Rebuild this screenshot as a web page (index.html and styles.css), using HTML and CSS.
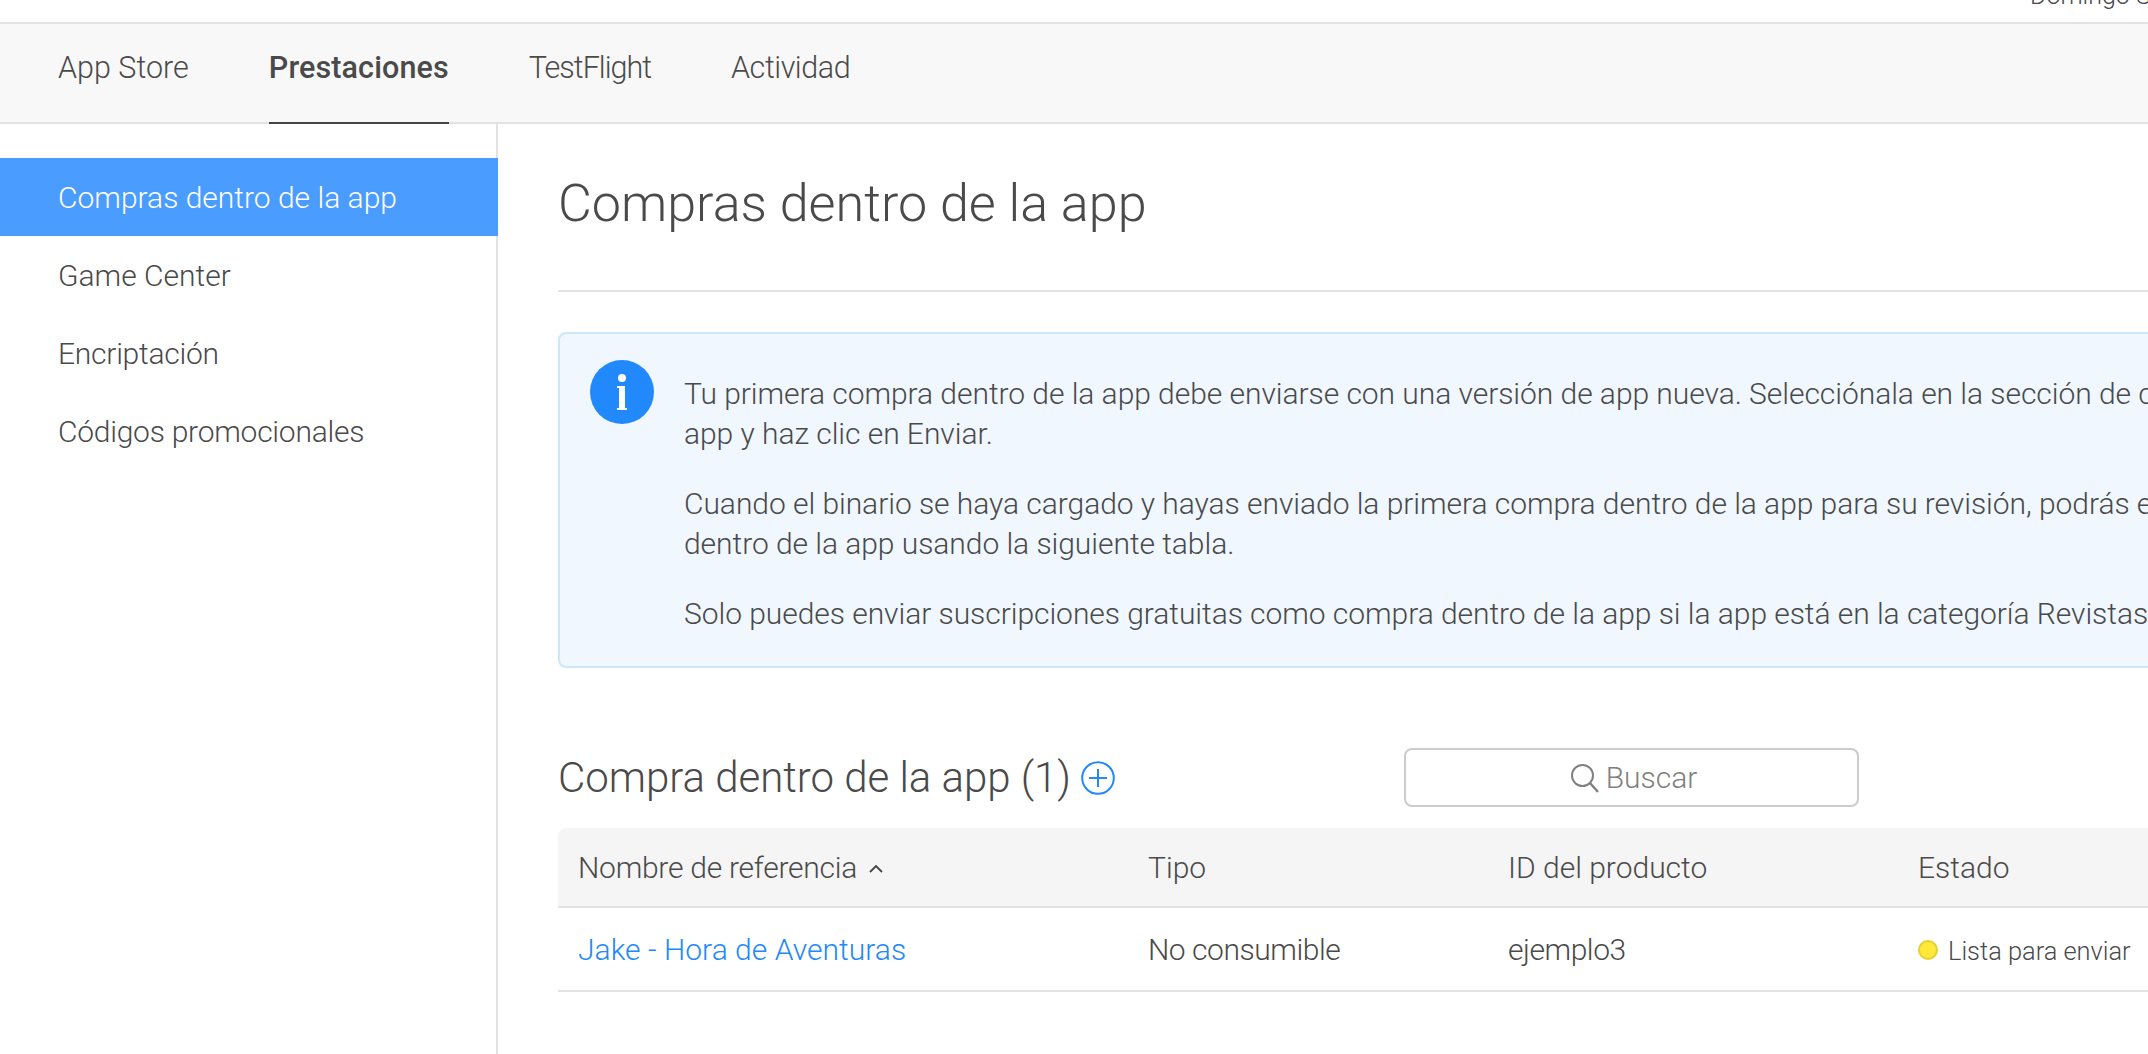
FILE: index.html
```html
<!DOCTYPE html>
<html lang="es">
<head>
  <meta charset="UTF-8">
  <title>Compras dentro de la app</title>
  <link rel="stylesheet" href="styles.css">
</head>
<body>
  <div class="topbar"><span class="user">Domingo S</span></div>

  <nav class="tabs">
    <a class="tab">App Store</a>
    <a class="tab active">Prestaciones</a>
    <a class="tab tight-lg">TestFlight</a>
    <a class="tab tight">Actividad</a>
  </nav>

  <div class="layout">
    <aside class="sidebar">
      <a class="side-item selected">Compras dentro de la app</a>
      <a class="side-item">Game Center</a>
      <a class="side-item tight-sm">Encriptación</a>
      <a class="side-item tight-sm">Códigos promocionales</a>
    </aside>

    <main class="content">
      <h1 class="page-title">Compras dentro de la app</h1>

      <div class="notice">
        <svg class="info-icon" viewBox="0 0 64 64">
          <circle cx="32" cy="32" r="32" fill="#2189fb"/>
          <circle cx="32" cy="18" r="4" fill="#fff"/>
          <path d="M27 26h8v22h2v2H27v-2h2V28h-2z" fill="#fff"/>
        </svg>
        <div class="notice-text">
          <p>Tu primera compra dentro de la app debe enviarse con una versión de app nueva. Selecciónala en la sección de compras dentro de la<br>app y haz clic en Enviar.</p>
          <p>Cuando el binario se haya cargado y hayas enviado la primera compra dentro de la app para su revisión, podrás enviar más compras<br>dentro de la app usando la siguiente tabla.</p>
          <p>Solo puedes enviar suscripciones gratuitas como compra dentro de la app si la app está en la categoría Revistas y periódicos.</p>
        </div>
      </div>

      <div class="section-head">
        <h2 class="section-title">Compra dentro de la app (1)</h2>
        <svg class="add-icon" viewBox="0 0 34 34">
          <circle cx="17" cy="17" r="15.8" fill="none" stroke="#2189fb" stroke-width="2"/>
          <path d="M17 8v18M8 17h18" stroke="#2189fb" stroke-width="2"/>
        </svg>
        <div class="search">
          <svg class="search-icon" viewBox="0 0 30 30">
            <circle cx="12.5" cy="12.5" r="10.5" fill="none" stroke="#808080" stroke-width="2"/>
            <path d="M20 20l8 9" stroke="#808080" stroke-width="2.4"/>
          </svg>
          <span>Buscar</span>
        </div>
      </div>

      <div class="table">
        <div class="row head">
          <div class="cell tight-sm">Nombre de referencia
            <svg class="sort" viewBox="0 0 14 9"><path d="M1 8l6-6 6 6" fill="none" stroke="#444" stroke-width="1.8"/></svg>
          </div>
          <div class="cell">Tipo</div>
          <div class="cell">ID del producto</div>
          <div class="cell">Estado</div>
        </div>
        <div class="row">
          <div class="cell"><a class="link">Jake - Hora de Aventuras</a></div>
          <div class="cell tight">No consumible</div>
          <div class="cell tight">ejemplo3</div>
          <div class="cell status"><span class="dot"></span><span class="status-text">Lista para enviar</span></div>
        </div>
      </div>
    </main>
  </div>
</body>
</html>
```

FILE: styles.css
```css
html, body { margin: 0; height: 100%; overflow: hidden; }
body { font-family: Roboto, "Liberation Sans", sans-serif; font-weight: 300; color: #4a4a4a; background: #fff; font-size: 30px; }
p, h1, h2 { margin: 0; font-weight: 300; }

.tight-lg { letter-spacing: -1px; }
.tight { letter-spacing: -.45px; }
.tight-sm { letter-spacing: -.25px; }

.topbar { height: 22px; overflow: hidden; display: flex; justify-content: flex-end; }
.user { font-size: 25px; line-height: 24px; margin-top: -16px; margin-right: -5px; width: 123px; white-space: nowrap; overflow: hidden; }

.tabs { display: flex; gap: 80px; height: 98px; padding-left: 58px; background: #f8f8f8; border-top: 2px solid #e2e2e2; border-bottom: 2px solid #e2e2e2; font-size: 30.5px; }
.tab { line-height: 88px; height: 100px; box-sizing: border-box; }
.tab.active { font-weight: 500; letter-spacing: .12px; border-bottom: 2px solid #444; }

.layout { display: flex; height: 930px; }
.sidebar { width: 496px; flex: none; padding-top: 34px; border-right: 2px solid #e2e2e2; }
.side-item { display: block; height: 78px; line-height: 80px; padding-left: 58px; }
.side-item.selected { background: #4a9cff; color: #fff; margin-right: -2px; }

.content { width: 2000px; flex: none; padding-left: 60px; }
.page-title { font-size: 52.1px; line-height: 60px; padding-top: 50px; padding-bottom: 56px; border-bottom: 2px solid #e2e2e2; }

.notice { margin-top: 40px; height: 336px; box-sizing: border-box; display: flex; background: #f0f7fe; border: 2px solid #cce6fb; border-radius: 8px; padding: 26px 30px; }
.info-icon { width: 64px; height: 64px; flex: none; margin-right: 30px; }
.notice-text { padding-top: 14px; line-height: 40px; white-space: nowrap; letter-spacing: -.05px; }
.notice-text p { margin-bottom: 30px; }

.section-head { display: flex; align-items: center; height: 60px; margin-top: 80px; }
.section-title { font-size: 42px; line-height: 60px; letter-spacing: -.03px; }
.add-icon { width: 34px; height: 34px; margin-left: 10px; }
.search { width: 455px; height: 59px; box-sizing: border-box; margin: -1px 0 0 289px; padding-left: 4px; border: 2px solid #ccc; border-radius: 8px; display: flex; align-items: center; justify-content: center; gap: 6px; color: #808080; }
.search-icon { width: 30px; height: 30px; }

.table { margin-top: 20px; }
.row { display: grid; grid-template-columns: 570px 360px 410px 1fr; height: 82px; align-items: center; padding-left: 20px; border-bottom: 2px solid #e2e2e2; }
.row.head { height: 78px; background: #f5f5f5; border-radius: 8px 8px 0 0; }
.sort { width: 14px; height: 9px; margin-left: 5px; vertical-align: 5px; }
.link { color: #2189fb; letter-spacing: .03px; }
.status { display: flex; align-items: center; }
.status-text { font-size: 25.4px; padding-top: 4px; }
.dot { width: 16px; height: 16px; margin: 2px 10px 0 0; background: #ffe93b; border: 2px solid #e8cf30; border-radius: 50%; }
```
